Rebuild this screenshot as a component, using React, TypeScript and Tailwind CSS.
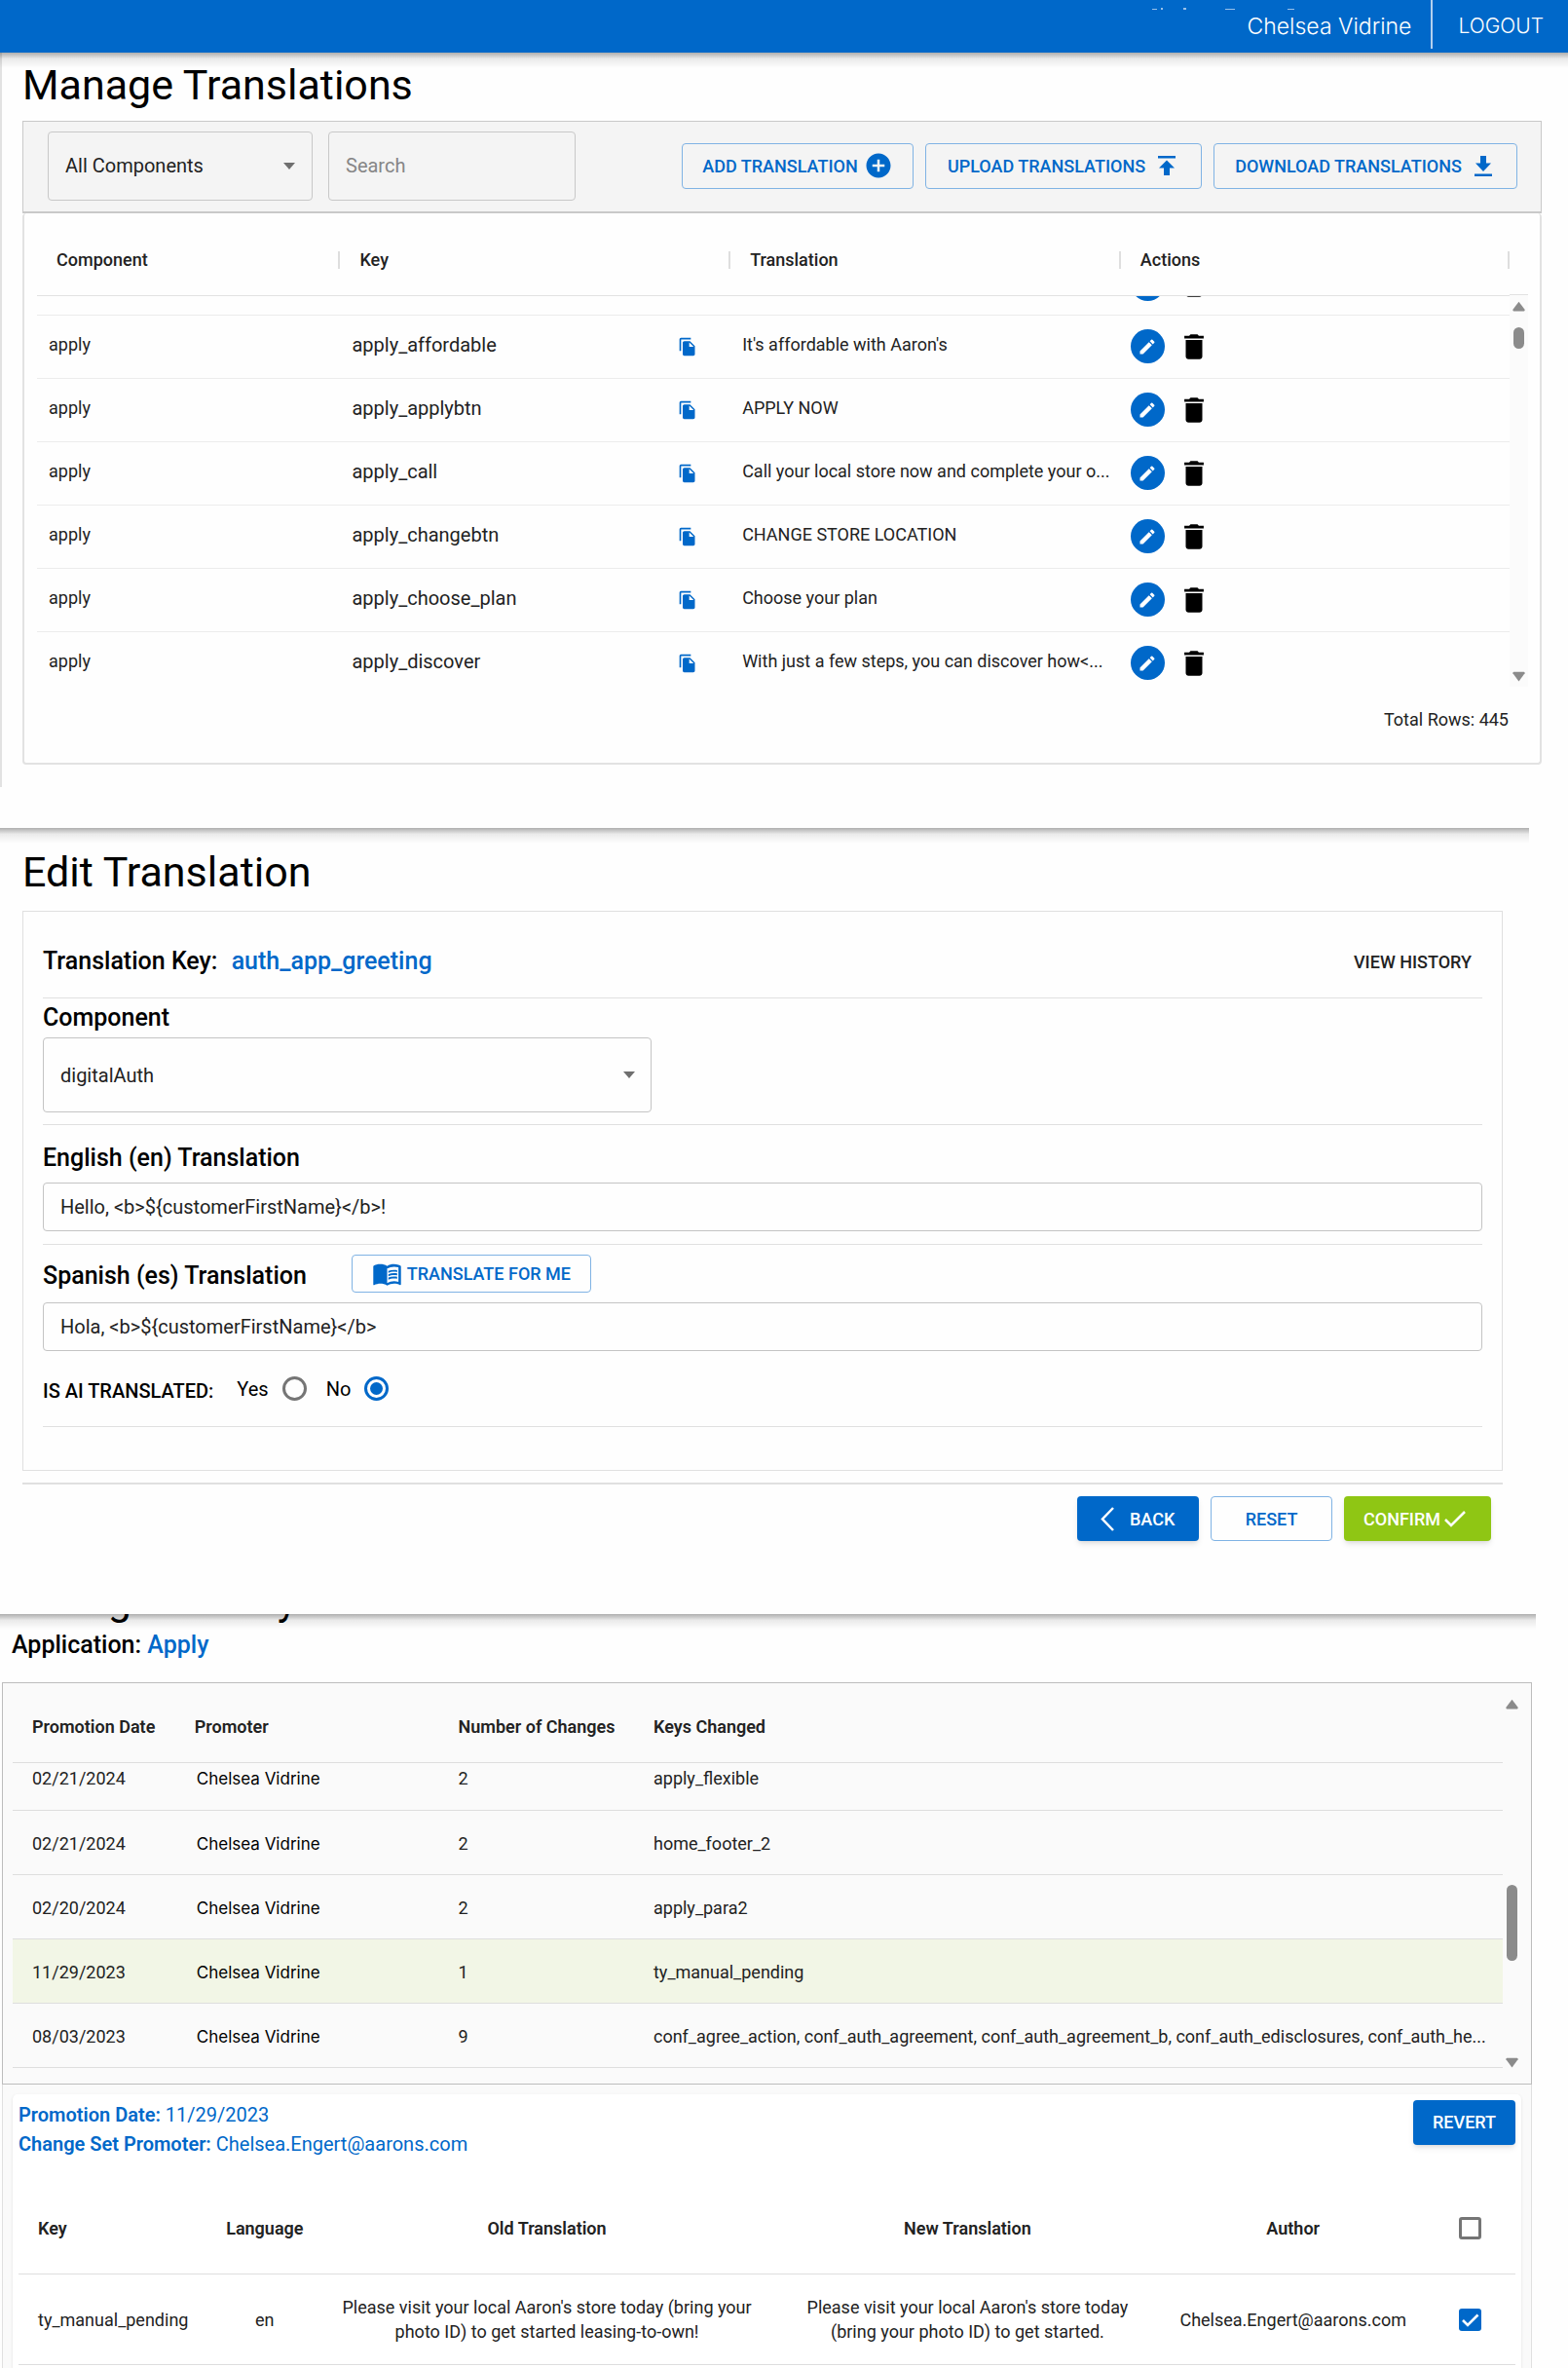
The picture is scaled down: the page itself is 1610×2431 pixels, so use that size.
import React from "react";
import { MdAddCircle, MdDelete, MdEdit, MdFileCopy, MdMenuBook } from "react-icons/md";

const translations = [
  { key: "apply_affordable", text: "It's affordable with Aaron's" },
  { key: "apply_applybtn", text: "APPLY NOW" },
  { key: "apply_call", text: "Call your local store now and complete your o..." },
  { key: "apply_changebtn", text: "CHANGE STORE LOCATION" },
  { key: "apply_choose_plan", text: "Choose your plan" },
  { key: "apply_discover", text: "With just a few steps, you can discover how<..." },
];

const promotions = [
  { date: "02/21/2024", count: 2, keys: "apply_flexible" },
  { date: "02/21/2024", count: 2, keys: "home_footer_2" },
  { date: "02/20/2024", count: 2, keys: "apply_para2" },
  { date: "11/29/2023", count: 1, keys: "ty_manual_pending" },
  {
    date: "08/03/2023",
    count: 9,
    keys: "conf_agree_action, conf_auth_agreement, conf_auth_agreement_b, conf_auth_edisclosures, conf_auth_he...",
  },
];

const outlineButton =
  "flex items-center justify-center rounded-[4px] border border-[#80b3e4] text-[18px] font-medium text-[#0068c9] whitespace-nowrap";

function DropShadow() {
  return (
    <div className="pointer-events-none absolute inset-x-0 top-full h-4 bg-linear-to-b from-[#00000050] via-[#00000014] via-40% to-transparent" />
  );
}

function UploadIcon() {
  return (
    <svg width="18" height="21" viewBox="0 0 18 21" fill="currentColor" aria-hidden="true">
      <path d="M0 0h18v2.6H0zM9 4.4l8 8.1h-5V20H6v-7.5H1z" />
    </svg>
  );
}

function DownloadIcon() {
  return (
    <svg width="18" height="21" viewBox="0 0 18 21" fill="currentColor" aria-hidden="true">
      <path d="M0 18.4h18V21H0zM9 16l8-8.5h-5V0H6v7.5H1z" />
    </svg>
  );
}

function ArrowDown({ className = "" }: { className?: string }) {
  return (
    <svg className={className} width="12" height="7" viewBox="0 0 12 7" fill="#6f6f6f" aria-hidden="true">
      <path d="M0 0h12L6 7z" />
    </svg>
  );
}

function ScrollArrow({ up = false }: { up?: boolean }) {
  return (
    <svg width="13" height="11" viewBox="0 0 12 10" fill="#8b8b8b" aria-hidden="true">
      {up ? <path d="M6 0.5L11.6 8q.4 1.5-.8 1.5H1.2Q0 9.5.4 8z" /> : <path d="M6 9.5L11.6 2q.4-1.5-.8-1.5H1.2Q0 .5.4 2z" />}
    </svg>
  );
}

function RowActions() {
  return (
    <div className="flex h-9 items-center gap-[13px]">
      <button aria-label="Edit" className="flex size-[35px] items-center justify-center rounded-full bg-[#0068c9] text-white">
        <MdEdit size={20} />
      </button>
      <button aria-label="Delete" className="text-black">
        <MdDelete size={34} />
      </button>
    </div>
  );
}

function ManageTranslations() {
  return (
    <section className="border-l-2 border-[#e2e2e2] pr-[27px] pb-[23px] pl-[21px]">
      <h1 className="pt-2 pb-3 text-[43px] leading-[50px] text-black">Manage Translations</h1>
      <div className="flex h-[95px] items-center border border-b-2 border-[#c9c9c9] bg-[#f4f4f4] pr-6 pb-0.5 pl-[25px]">
        <div className="relative w-[272px]">
          <select
            aria-label="Component filter"
            className="h-[71px] w-full appearance-none rounded-[4px] border border-[#c8c8c8] bg-transparent px-[17px] text-[20px] text-[#222]"
          >
            <option>All Components</option>
          </select>
          <ArrowDown className="pointer-events-none absolute top-8 right-[18px]" />
        </div>
        <input
          aria-label="Search"
          placeholder="Search"
          className="ml-4 h-[71px] w-[254px] rounded-[4px] border border-[#c8c8c8] bg-transparent px-[17px] text-[20px] placeholder:text-[#868686]"
        />
        <div className="ml-auto flex gap-3">
          <button className={`${outlineButton} h-[47px] w-[238px] gap-[6px]`}>
            ADD TRANSLATION <MdAddCircle size={30} />
          </button>
          <button className={`${outlineButton} h-[47px] w-[284px] gap-[13px] pr-1`}>
            UPLOAD TRANSLATIONS <UploadIcon />
          </button>
          <button className={`${outlineButton} h-[47px] w-[312px] gap-[13px] pr-1`}>
            DOWNLOAD TRANSLATIONS <DownloadIcon />
          </button>
        </div>
      </div>
      <div className="rounded-[4px] border-x-2 border-b-2 border-[#e2e2e2] pr-3 pb-8 pl-[13px]">
        <div className="flex">
          <table className="flex-1 table-fixed border-collapse text-left text-[18px] text-[#222]">
            <colgroup>
              <col className="w-[20.6%]" />
              <col className="w-[26.5%]" />
              <col className="w-[26.5%]" />
              <col className="w-[26.4%]" />
            </colgroup>
            <thead>
              <tr className="h-[84px] border-b border-[#e2e2e2]">
                {["Component", "Key", "Translation", "Actions"].map((h) => (
                  <th key={h} className="p-0 pt-3 font-medium">
                    <div className="flex h-[18px] items-center border-r-2 border-[#dedede] pl-5">{h}</div>
                  </th>
                ))}
              </tr>
            </thead>
            <tbody>
              <tr className="border-b border-[#ececec]">
                <td colSpan={3} />
                <td className="h-5 p-0 pl-[10px] align-top">
                  <div className="flex h-[6px] items-end overflow-hidden">
                    <RowActions />
                  </div>
                </td>
              </tr>
              {translations.map((t) => (
                <tr key={t.key} className="h-[65px] border-b border-[#ececec] last:border-b-0">
                  <td className="p-0 pb-1 pl-3">apply</td>
                  <td className="p-0 pl-3 text-[20px]">
                    <div className="flex items-center justify-between pr-[34px]">
                      <span className="pb-1">{t.key}</span>
                      <button aria-label={`Copy ${t.key}`} className="text-[#0068c9]">
                        <MdFileCopy size={20} />
                      </button>
                    </div>
                  </td>
                  <td className="p-0 pb-1 pl-3 whitespace-nowrap">{t.text}</td>
                  <td className="p-0 pl-[10px]">
                    <RowActions />
                  </td>
                </tr>
              ))}
            </tbody>
          </table>
          <div className="flex w-[19px] flex-col pb-2">
            <div className="h-[84px] border-b border-[#e2e2e2]" />
            <div className="flex flex-1 flex-col items-center bg-[#fbfbfb] pt-[6px] pb-[5px]">
              <ScrollArrow up />
              <div className="mt-4 mb-auto h-[22px] w-[11px] rounded-full bg-[#8b8b8b]" />
              <ScrollArrow />
            </div>
          </div>
        </div>
        <p className="mt-[14px] pr-5 text-right text-[18px] leading-6 text-[#222]">Total Rows: 445</p>
      </div>
    </section>
  );
}

function EditTranslation() {
  const field = "h-[50px] w-full rounded-[4px] border border-[#c4c4c4] bg-transparent px-[17px] text-[20px] text-[#222]";
  const label = "text-[25px] font-medium text-black";
  return (
    <section className="relative pr-[67px] pl-[23px]">
      <div className="absolute top-0 right-10 left-0">
        <DropShadow />
      </div>
      <h1 className="pt-5 pb-[15px] text-[43px] leading-[50px] text-black">Edit Translation</h1>
      <div className="border border-[#e0e0e0] px-5 pb-11">
        <div className="flex h-[89px] items-center justify-between border-b border-[#e0e0e0] pt-[14px]">
          <h2 className="text-[25px] font-medium text-black">
            Translation Key: <span className="ml-2 text-[#0068c9]">auth_app_greeting</span>
          </h2>
          <button className="mr-[11px] text-[18px] font-medium text-[#222]">VIEW HISTORY</button>
        </div>
        <div className="border-b border-[#e0e0e0] pb-3">
          <label htmlFor="component" className={`${label} block leading-10`}>
            Component
          </label>
          <div className="relative w-[42.3%]">
            <select
              id="component"
              className="block h-[77px] w-full appearance-none rounded-[4px] border border-[#c4c4c4] bg-transparent px-[17px] text-[20px] text-[#222]"
            >
              <option>digitalAuth</option>
            </select>
            <ArrowDown className="pointer-events-none absolute top-[35px] right-[17px]" />
          </div>
        </div>
        <div className="border-b border-[#e0e0e0] pb-[13px]">
          <label htmlFor="english" className={`${label} flex h-[59px] items-center pt-2`}>
            English (en) Translation
          </label>
          <input id="english" className={field} defaultValue="Hello, <b>${customerFirstName}</b>!" />
        </div>
        <div className="border-b border-[#e0e0e0]">
          <div className="flex h-[59px] items-center gap-[46px]">
            <label htmlFor="spanish" className={`${label} pt-1`}>
              Spanish (es) Translation
            </label>
            <button className={`${outlineButton} h-[39px] w-[246px] gap-[5px]`}>
              <MdMenuBook size={31} /> TRANSLATE FOR ME
            </button>
          </div>
          <input id="spanish" className={field} defaultValue="Hola, <b>${customerFirstName}</b>" />
          <fieldset className="flex h-[77px] items-center text-black">
            <legend className="float-left mr-6 pt-1 text-[20px] font-medium">IS AI TRANSLATED:</legend>
            <label className="mr-5 flex items-center gap-[14px] text-[20px]">
              Yes
              <input type="radio" name="ai" className="size-[25px] appearance-none rounded-full border-[3px] border-[#757575]" />
            </label>
            <label className="flex items-center gap-[14px] text-[20px]">
              No
              <input
                type="radio"
                name="ai"
                defaultChecked
                className="size-[25px] appearance-none rounded-full border-[3px] border-[#0068c9] bg-[#0068c9] bg-clip-content p-[3px]"
              />
            </label>
          </fieldset>
        </div>
      </div>
      <div className="mt-3 flex items-start justify-end gap-3 border-t-2 border-[#e0e0e0] pt-3 pr-3 pb-[75px]">
        <button className="flex h-[46px] w-[125px] items-center gap-4 rounded-[4px] bg-[#0068c9] pl-6 text-[18px] font-medium text-white shadow-md">
          <svg width="14" height="25" viewBox="0 0 14 25" fill="none" stroke="currentColor" strokeWidth="2.5" aria-hidden="true">
            <path d="M13 1L2 12.5L13 24" />
          </svg>
          BACK
        </button>
        <button className={`${outlineButton} h-[46px] w-[125px]`}>RESET</button>
        <button className="flex h-[46px] w-[151px] items-center gap-1 rounded-[4px] bg-[#8fc614] pl-5 text-[18px] font-medium text-white shadow-md">
          CONFIRM
          <svg width="22" height="17" viewBox="0 0 22 17" fill="none" stroke="currentColor" strokeWidth="2.5" aria-hidden="true">
            <path d="M1 9l6 6L21 1" />
          </svg>
        </button>
      </div>
    </section>
  );
}

const box = "block size-[23px] appearance-none rounded-[3px]";

function ChangeHistory() {
  return (
    <section className="relative pr-[37px] pl-[2px]">
      <div className="absolute top-0 right-[33px] left-0 z-10">
        <DropShadow />
      </div>
      <div className="flex h-[10px] items-end overflow-hidden pl-[10px]">
        <h1 className="text-[43px] leading-[50px] text-black">Change History</h1>
      </div>
      <h2 className="pt-2 pb-6 pl-[10px] text-[25px] leading-7 font-medium text-black">
        Application: <span className="text-[#0068c9]">Apply</span>
      </h2>
      <div className="flex border border-[#bdbdbd] bg-[#fafafa] pr-[10px] pb-4 pl-[10px]">
        <table className="flex-1 table-fixed border-collapse text-left text-[18px] text-[#222]">
          <colgroup>
            <col className="w-[10.9%]" />
            <col className="w-[17.7%]" />
            <col className="w-[13.1%]" />
            <col className="w-[58.3%]" />
          </colgroup>
          <thead>
            <tr className="h-[81px] border-b border-[#dedede]">
              {["Promotion Date", "Promoter", "Number of Changes", "Keys Changed"].map((h) => (
                <th key={h} className="p-0 pt-2 pl-5 font-semibold whitespace-nowrap">
                  {h}
                </th>
              ))}
            </tr>
          </thead>
          <tbody>
            {promotions.map((p, i) => (
              <tr
                key={i}
                className={`border-b border-[#dedede] leading-6 ${i === 0 ? "h-[49px] align-top" : "h-[66px]"} ${
                  i === 3 ? "bg-[#f2f6e6]" : ""
                }`}
              >
                <td className="p-0 pt-1 pl-5">{p.date}</td>
                <td className="p-0 pt-1 pl-[22px] font-['Inter',sans-serif] text-[17px] text-black">Chelsea Vidrine</td>
                <td className="p-0 pt-1 pl-5">{p.count}</td>
                <td className="p-0 pt-1 pl-5 whitespace-nowrap">{p.keys}</td>
              </tr>
            ))}
          </tbody>
        </table>
        <div className="flex w-[19px] flex-col items-center pt-4">
          <ScrollArrow up />
          <div className="mt-[180px] mb-auto h-[78px] w-[11px] rounded-full bg-[#8b8b8b]" />
          <ScrollArrow />
        </div>
      </div>
      <div className="border-x border-[#e0e0e0] bg-[#fafafa] px-[10px] pt-[10px]">
        <div className="rounded-t-[5px] bg-white px-[6px] pt-[6px] pb-1 shadow-sm">
          <div className="flex items-start justify-between text-[20px] leading-[30px] text-[#0068c9]">
            <div>
              <p>
                <b className="font-semibold">Promotion Date:</b> 11/29/2023
              </p>
              <p>
                <b className="font-semibold">Change Set Promoter:</b> Chelsea.Engert@aarons.com
              </p>
            </div>
            <button className="h-[46px] rounded-[4px] bg-[#0068c9] px-5 text-[18px] font-medium text-white shadow-md">REVERT</button>
          </div>
          <table className="mt-[26px] w-full table-fixed border-collapse text-center text-[18px] leading-[25px] text-[#222]">
            <colgroup>
              <col className="w-[12.6%]" />
              <col className="w-[7.7%]" />
              <col className="w-[30%]" />
              <col className="w-[26.2%]" />
              <col className="w-[17.3%]" />
              <col className="w-[6.2%]" />
            </colgroup>
            <thead>
              <tr className="h-[93px] border-b border-[#dedede]">
                <th className="pl-5 text-left font-semibold">Key</th>
                <th className="font-semibold">Language</th>
                <th className="font-semibold">Old Translation</th>
                <th className="font-semibold">New Translation</th>
                <th className="font-semibold">Author</th>
                <th className="pl-[37px]">
                  <input type="checkbox" aria-label="Select all" className={`${box} border-[3px] border-[#757575]`} />
                </th>
              </tr>
            </thead>
            <tbody>
              <tr className="h-[93px] border-b border-[#dedede]">
                <td className="pl-5 text-left">ty_manual_pending</td>
                <td>en</td>
                <td className="px-5">Please visit your local Aaron's store today (bring your photo ID) to get started leasing-to-own!</td>
                <td className="px-5">Please visit your local Aaron's store today (bring your photo ID) to get started.</td>
                <td>Chelsea.Engert@aarons.com</td>
                <td className="pl-[37px]">
                  <div className="relative size-[23px]">
                    <input type="checkbox" aria-label="Select ty_manual_pending" defaultChecked className={`${box} bg-[#0068c9]`} />
                    <svg
                      className="pointer-events-none absolute inset-0"
                      width="23"
                      height="23"
                      viewBox="0 0 23 23"
                      fill="none"
                      stroke="white"
                      strokeWidth="2.6"
                      aria-hidden="true"
                    >
                      <path d="M4 12l5 5L19.5 6.5" />
                    </svg>
                  </div>
                </td>
              </tr>
            </tbody>
          </table>
        </div>
      </div>
    </section>
  );
}

export default function App() {
  return (
    <div className="bg-[#fefefe] font-['Roboto',sans-serif]">
      <header className="relative flex h-[54px] justify-end bg-[#0068c9] pr-[25px] font-['Inter',sans-serif] font-light text-white">
        <svg className="absolute top-2 right-[280px] opacity-60" width="148" height="2" viewBox="0 0 148 2" fill="white" aria-hidden="true">
          <path d="M1 1h5v1H1zM10 0h2v2h-2zM33 0h3v2h-3zM76 1h10v1H76zM140 1h7v1h-7z" />
        </svg>
        <span className="flex h-[50px] items-center border-r-2 border-[#b3d0ee] pt-1 pr-5 text-[23px]">Chelsea Vidrine</span>
        <a href="#logout" className="flex h-[50px] items-center pt-1 pl-[26px] text-[21px]">
          LOGOUT
        </a>
        <DropShadow />
      </header>
      <main>
        <ManageTranslations />
        <div className="h-[42px]" />
        <EditTranslation />
        <ChangeHistory />
      </main>
    </div>
  );
}
